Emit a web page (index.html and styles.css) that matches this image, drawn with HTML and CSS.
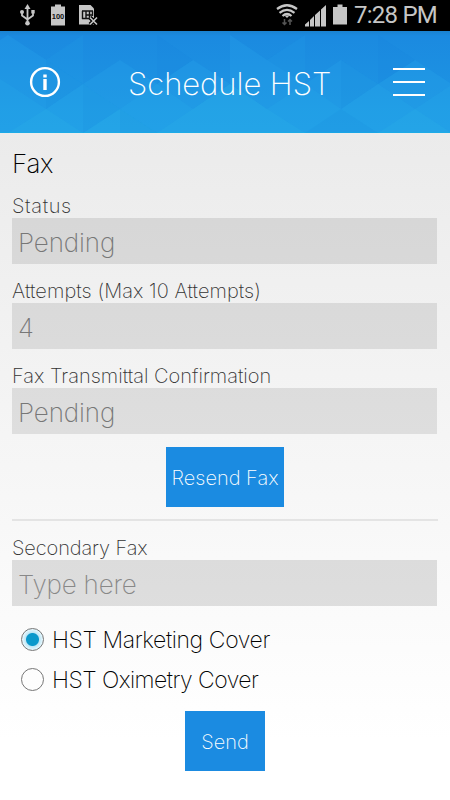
FILE: index.html
```html
<!DOCTYPE html>
<html lang="en">
<head>
<meta charset="utf-8">
<title>Schedule HST</title>
<link rel="stylesheet" href="styles.css">
</head>
<body>
<div class="statusbar">
  <svg class="status-icons" width="110" height="31" viewBox="0 0 110 31">
    <g fill="none" stroke="#c6c6c6" stroke-width="1.8">
      <path d="M27.500 7v16M22 11.500v4l5.500 4M33 11v4.500l-5.500 4"/>
    </g>
    <g fill="#c6c6c6">
      <path d="M27.500 4l3 5h-6z"/><circle cx="22" cy="12" r="2"/><path d="M31.300 10h3.400v3.400h-3.400z"/><circle cx="27.500" cy="23.200" r="2.300"/>
      <path d="M51 6.500h4V4.500h6v2h4V25.500H51z"/>
      <path d="M79 5h11.500l3.500 3.500V24.500H79z"/>
    </g>
    <text class="battery-text" x="58" y="18.500" text-anchor="middle">100</text>
    <path d="M82 11h11M82 18.500h8M82.500 11v8M86 11v8M89.500 11v8M92.500 11v5M86 15h6" fill="none" stroke="#111" stroke-width="1.400"/>
    <path d="M90 17.500l7 7M97 17.500l-7 7" stroke="#000" stroke-width="4"/>
    <path d="M90 17.500l7 7M97 17.500l-7 7" stroke="#c6c6c6" stroke-width="1.600"/>
  </svg>
  <svg class="status-icons" width="72" height="31" viewBox="276 0 72 31">
    <g fill="none" stroke="#c6c6c6" stroke-width="2.200">
      <path d="M277 9Q287 1.500 297 9M279.500 12.800Q287 7 294.500 12.800M282.500 16Q287 12 291.500 16"/>
    </g>
    <path d="M284.500 15.500h5l-2.500 2.500z" fill="#c6c6c6"/>
    <path d="M284.500 19v5.500M282.500 22.500l2 2 2-2M290 25v-5.500M288 21.500l2-2 2 2" fill="none" stroke="#555" stroke-width="1.500"/>
    <path d="M305 26.500v-2l4-3.500v5.500zM310 26.500v-6.500l4-4v10.500zM315 26.500v-11.500l5-4.500v16zM321 26.500v-17l5-4.500v21.500z" fill="#c6c6c6"/>
    <path d="M333 7h4.500V4.500h5V7h4.500v17.500h-14z" fill="#c6c6c6"/>
  </svg>
  <span class="clock">7:28 PM</span>
</div>
<header class="header">
  <svg class="pattern" width="450" height="102" viewBox="0 0 450 102">
    <g fill="#2bb0ee" fill-opacity=".2">
      <path d="M0 9L8 4L83 53L120 29L157 53L193 29L230 53V4L267 29L305 4V53L341 29L378 53L415 29L450 52V102H0z"/>
      <path d="M46 29L83 4V53z" fill-opacity=".12"/>
    </g>
    <g fill="#2bb3ee" fill-opacity=".16">
      <path d="M0 48L8 53L46 78L83 53L120 78L157 53L193 78L230 53L267 78L305 53L341 78L378 53L415 78L450 55V102H0z"/>
    </g>
    <g fill="#33b8e8" fill-opacity=".16">
      <path d="M46 78L83 102H8zM120 78L157 102H83zM193 78L230 102H157zM193 78L230 53L267 78L230 102zM267 78L305 102H230zM415 78L450 101V102H378z"/>
    </g>
    <g fill="#0873d4" fill-opacity=".07">
      <path d="M157 4L193 29L157 53zM267 29L305 4V53zM378 4L415 29L378 53zM46 29L83 53L46 78zM83 53L120 78L83 102zM120 78V102H157zM341 29L378 53L341 78zM341 78L378 102H305z"/>
    </g>
  </svg>
  <svg class="info" width="32" height="32" viewBox="0 0 32 32">
    <circle cx="16" cy="16" r="13.900" fill="none" stroke="#fff" stroke-width="2.400"/>
    <path d="M14.300 13h3.400v11h-3.400zM14.300 8.500h3.400v3h-3.400z" fill="#fff"/>
  </svg>
  <h1 class="title">Schedule HST</h1>
  <div class="menu"><i></i><i></i><i></i></div>
</header>
<main class="content">
  <h2 class="heading">Fax</h2>
  <div class="label status">Status</div>
  <div class="field">Pending</div>
  <div class="label gap attempts">Attempts (Max 10 Attempts)</div>
  <div class="field">4</div>
  <div class="label gap">Fax Transmittal Confirmation</div>
  <div class="field">Pending</div>
  <div class="button resend">Resend Fax</div>
  <div class="rule"></div>
  <div class="label second">Secondary Fax</div>
  <div class="field placeholder">Type here</div>
  <div class="options">
    <div class="option marketing"><span class="radio checked"></span><span>HST Marketing Cover</span></div>
    <div class="option oximetry"><span class="radio"></span><span>HST Oximetry Cover</span></div>
  </div>
  <div class="button send">Send</div>
</main>
</body>
</html>
```
FILE: styles.css
```css
* { box-sizing: border-box; }
body {
  margin: 0;
  width: 450px;
  height: 800px;
  overflow: hidden;
  font-family: Inter, "Noto Sans", sans-serif;
  font-weight: 200;
  background: linear-gradient(#ebebeb 130px, #fff 740px);
}
.statusbar {
  display: flex;
  height: 31px;
  background: #000;
  color: #c6c6c6;
}
.status-icons { display: block; flex: none; }
.status-icons + .status-icons { margin-left: 166px; }
.battery-text { font: 700 7.5px "Liberation Sans", sans-serif; fill: #111; }
.clock {
  margin-left: 6px;
  font: 400 24px/30px Roboto, sans-serif;
  letter-spacing: -.75px;
  white-space: nowrap;
}
.header {
  position: relative;
  display: flex;
  align-items: center;
  height: 102px;
  padding: 0 25px 0 29px;
  background: linear-gradient(#1a82d0, #1b8ae0 5px, #1e99e4);
  border-bottom: 1px solid #12a5e6;
  color: #fff;
}
.pattern { position: absolute; left: 0; top: 0; }
.info { position: relative; }
.title {
  position: relative;
  margin: 4px 0 0 67px;
  width: 203px;
  font-size: 31px;
  line-height: 40px;
  font-weight: 200;
  letter-spacing: -.05px;
  white-space: nowrap;
}
.menu {
  position: relative;
  display: flex;
  flex-direction: column;
  justify-content: space-between;
  width: 32px;
  height: 28px;
  margin-left: 62px;
}
.menu i { height: 2px; background: #fff; }
.content { padding: 0 12px; }
.heading {
  margin: 0;
  padding-top: 13px;
  height: 64px;
  font-size: 26px;
  line-height: 36px;
  font-weight: 200;
  letter-spacing: -.3px;
  color: #000;
}
.label {
  height: 21px;
  font-size: 20px;
  line-height: 18px;
  color: #333;
  white-space: nowrap;
}
.label.gap { margin-top: 18px; }
.status { letter-spacing: .65px; }
.attempts { letter-spacing: .07px; }
.second { letter-spacing: -.12px; }
.field {
  height: 46px;
  padding: 2px 6px 0;
  width: 425px;
  font-size: 26px;
  line-height: 46px;
  letter-spacing: -.1px;
  color: #777;
  background: rgba(0, 0, 0, .095);
}
.placeholder {
  color: #888;
  letter-spacing: -.2px;
  background: rgba(0, 0, 0, .115);
}
.button {
  display: flex;
  align-items: center;
  justify-content: center;
  height: 60px;
  margin: 0 auto;
  padding-top: 2px;
  font-size: 20px;
  color: #fff;
  background: #1b8be1;
  white-space: nowrap;
}
.resend { width: 118px; margin-top: 13px; }
.rule { height: 2px; margin: 12px 0 18px; background: #e4e4e4; }
.options { padding: 14px 0 0 9px; }
.option {
  display: flex;
  align-items: center;
  gap: 8px;
  height: 40px;
  font-size: 23px;
  color: #000;
  white-space: nowrap;
}
.marketing { letter-spacing: -.4px; }
.oximetry { letter-spacing: -.55px; }
.radio {
  width: 23px;
  height: 23px;
  margin-top: -2px;
  border: 1px solid #777;
  border-radius: 50%;
}
.checked { background: radial-gradient(circle, #0a98cb 0 6px, #bfe6f5 7px, #e3f6fd 10px); }
.send { width: 80px; margin-top: 11px; }
```
